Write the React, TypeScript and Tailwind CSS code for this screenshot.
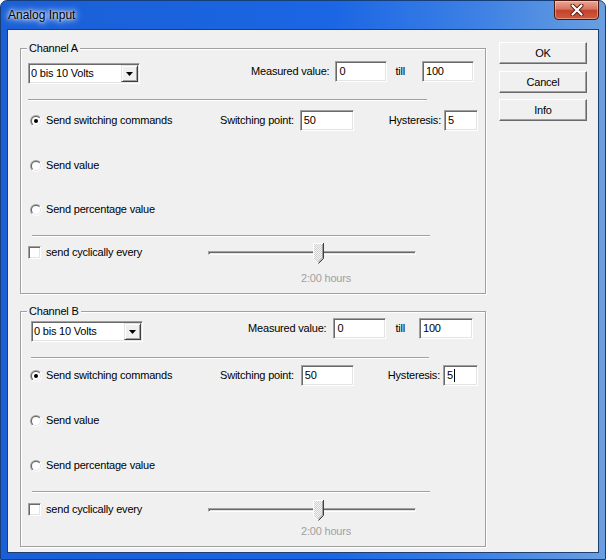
import React from 'react';

const sunken =
  'bg-white border border-t-[#a0a0a0] border-l-[#a0a0a0] border-b-white border-r-white shadow-[inset_1px_1px_0_#696969,inset_-1px_-1px_0_#e3e3e3]';

function TextField({ value, className, cursor }: { value: string; className: string; cursor?: boolean }) {
  return (
    <div className={`h-[21px] flex items-center pl-[3px] ${sunken} ${className}`}>
      <span>{value}</span>
      {cursor && <span className="ml-[1px] w-px h-[13px] bg-black" />}
    </div>
  );
}

function Combo({ className }: { className: string }) {
  return (
    <div className={`w-[112px] h-[21px] flex items-center pl-[2px] pr-[1px] ${sunken} ${className}`}>
      <span className="flex-1">0 bis 10 Volts</span>
      <div className="w-[17px] h-[17px] bg-[#f0f0f0] border border-t-[#e3e3e3] border-l-[#e3e3e3] border-b-[#404040] border-r-[#404040] shadow-[inset_1px_1px_0_#fff,inset_-1px_-1px_0_#a0a0a0] flex items-center justify-center">
        <svg width="7" height="4" viewBox="0 0 7 4">
          <polygon points="0,0 7,0 3.5,4" fill="#000" />
        </svg>
      </div>
    </div>
  );
}

function Radio({ checked }: { checked?: boolean }) {
  return (
    <svg width="12" height="12" viewBox="0 0 12 12" className="shrink-0">
      <defs>
        <linearGradient id="ro" x1="0" y1="0" x2="1" y2="1">
          <stop offset="0.5" stopColor="#a0a0a0" />
          <stop offset="0.5" stopColor="#ffffff" />
        </linearGradient>
        <linearGradient id="ri" x1="0" y1="0" x2="1" y2="1">
          <stop offset="0.5" stopColor="#696969" />
          <stop offset="0.5" stopColor="#e3e3e3" />
        </linearGradient>
      </defs>
      <circle cx="6" cy="6" r="6" fill="url(#ro)" />
      <circle cx="6" cy="6" r="5" fill="url(#ri)" />
      <circle cx="6" cy="6" r="4" fill="#fff" />
      {checked && <circle cx="6" cy="6" r="2" fill="#000" />}
    </svg>
  );
}

function Slider() {
  return (
    <div className="relative w-[208px] h-[21px] flex items-center">
      <div className="w-full h-[4px] bg-[#e3e3e3] border border-t-[#a0a0a0] border-l-[#a0a0a0] border-b-white border-r-white shadow-[inset_1px_1px_0_#696969]" />
      <svg className="absolute left-[105px] top-[1px]" width="11" height="21" viewBox="0 0 11 21">
        <defs>
          <pattern id="dith" width="2" height="2" patternUnits="userSpaceOnUse">
            <rect width="2" height="2" fill="#f4f4f4" />
            <rect width="1" height="1" fill="#d0d0d0" />
            <rect x="1" y="1" width="1" height="1" fill="#d0d0d0" />
          </pattern>
        </defs>
        <polygon points="0.5,0.5 10.5,0.5 10.5,15.5 5.5,20.5 0.5,15.5" fill="url(#dith)" />
        <polyline points="0.5,15.5 0.5,0.5 10,0.5" stroke="#fff" fill="none" />
        <line x1="0.5" y1="15.5" x2="5" y2="20" stroke="#fff" />
        <polyline points="9.5,1 9.5,15 5.5,19" stroke="#a0a0a0" fill="none" />
        <polyline points="10.5,0 10.5,15.5 5.5,20.5" stroke="#404040" fill="none" />
      </svg>
    </div>
  );
}

function Separator({ className }: { className: string }) {
  return <div className={`h-[2px] border-t border-t-[#a0a0a0] border-b border-b-white ${className}`} />;
}

function Channel({ name, b }: { name: string; b?: boolean }) {
  return (
    <div
      className={`relative w-[466px] border border-[#a0a0a0] shadow-[1px_1px_0_#fff,inset_1px_1px_0_#fff] ${
        b ? 'mt-[17px] h-[236px] pt-[6px]' : 'mt-[18px] h-[246px] pt-[12px]'
      }`}
    >
      <span className="absolute left-[6px] -top-[7px] bg-[#f0f0f0] px-[2px] leading-[13px]">{name}</span>

      <div className={`flex items-start h-[24px] ${b ? 'pr-[12px]' : 'pr-[11px]'}`}>
        <Combo className={b ? 'ml-[10px] mt-[3px]' : 'ml-[7px] mt-[2px]'} />
        <div className="ml-auto flex items-center">
          <span>Measured value:</span>
          <TextField value="0" className={b ? 'ml-[7px] w-[53px]' : 'ml-[6px] w-[52px]'} />
          <span className={b ? 'ml-[9px]' : 'ml-[8px]'}>till</span>
          <TextField value="100" className={b ? 'ml-[14px] w-[54px]' : 'ml-[17px] w-[52px]'} />
        </div>
      </div>

      <Separator className={b ? 'mt-[15px] ml-[10px] w-[398px]' : 'mt-[14px] ml-[7px] w-[399px]'} />

      <div className={`flex items-center h-[21px] pr-[7px] ${b ? 'mt-[6px]' : 'mt-[9px]'}`}>
        <div className="ml-[9px] w-[190px] flex items-center">
          <Radio checked />
          <span className="ml-[4px]">Send switching commands</span>
        </div>
        <span>Switching point:</span>
        <TextField value="50" className={b ? 'ml-[7px] w-[53px]' : 'ml-[6px] w-[54px]'} />
        <span className="ml-auto">Hysteresis:</span>
        <TextField value="5" cursor={b} className={b ? 'ml-[3px] w-[35px]' : 'ml-[3px] w-[34px]'} />
      </div>

      <div className="mt-[24px] ml-[9px] flex items-center h-[21px]">
        <Radio />
        <span className="ml-[4px]">Send value</span>
      </div>
      <div className={`ml-[9px] flex items-center h-[21px] ${b ? 'mt-[24px]' : 'mt-[23px]'}`}>
        <Radio />
        <span className="ml-[4px]">Send percentage value</span>
      </div>

      <Separator className="mt-[15px] ml-[11px] w-[398px]" />

      <div className={`flex items-center h-[21px] ml-[7px] ${b ? 'mt-[6px]' : 'mt-[5px]'}`}>
        <div className="w-[180px] flex items-center">
          <div className={`w-[13px] h-[13px] ${sunken}`} />
          <span className="ml-[5px]">send cyclically every</span>
        </div>
        <Slider />
      </div>

      <div className={`ml-[280px] h-[14px] leading-[14px] text-[#a0a0a0] ${b ? 'mt-[4px]' : 'mt-[8px]'}`}>2:00 hours</div>
    </div>
  );
}

function Btn({ children, className = '' }: { children: React.ReactNode; className?: string }) {
  return (
    <div
      className={`h-[22px] w-[88px] flex items-center justify-center bg-[#f0f0f0] border border-t-white border-l-white border-b-[#696969] border-r-[#696969] shadow-[inset_-1px_-1px_0_#a0a0a0] ${className}`}
    >
      {children}
    </div>
  );
}

export default function App() {
  return (
    <div className="w-[606px] h-[560px] bg-white font-['Liberation_Sans',Arial,sans-serif] text-[11px] tracking-[-0.2px] text-black">
      <div className="w-full h-full flex flex-col rounded-t-[7px] border border-[#163e78] bg-[linear-gradient(90deg,#1a5fd6_0%,#1b66e4_55%,#3f82e4_80%,#6a9fe0_100%)]">
        <div className="h-[28px] flex items-start">
          <div className="h-[28px] flex items-center pl-[7px] text-[12px] tracking-normal [text-shadow:0_0_6px_#fff,0_0_3px_#fff,0_0_10px_#fff]">
            Analog Input
          </div>
          <div className="ml-auto mr-[6px] -mt-px w-[45px] h-[20px] rounded-b-[4px] border border-[#4a1a12] bg-[linear-gradient(#e9a796_0%,#d9735e_45%,#c4432b_52%,#cf5b3c_100%)] flex items-center justify-center shadow-[inset_0_0_0_1px_rgba(255,255,255,0.35)]">
            <svg width="14" height="12" viewBox="0 0 14 12">
              <path d="M2.5 1.5 L11.5 10.5 M11.5 1.5 L2.5 10.5" stroke="#5a1a10" strokeWidth="4" strokeLinecap="round" />
              <path d="M2.5 1.5 L11.5 10.5 M11.5 1.5 L2.5 10.5" stroke="#fff" strokeWidth="2.2" strokeLinecap="round" />
            </svg>
          </div>
        </div>
        <div className="flex-1 mx-[6px] mb-[6px] border border-[#1e3f70] bg-[#f0f0f0] flex items-start pl-[12px]">
          <div className="flex flex-col">
            <Channel name="Channel A" />
            <Channel name="Channel B" b />
          </div>
          <div className="ml-[13px] mt-[12px] flex flex-col">
            <Btn>OK</Btn>
            <Btn className="mt-[7px]">Cancel</Btn>
            <Btn className="mt-[6px]">Info</Btn>
          </div>
        </div>
      </div>
    </div>
  );
}
